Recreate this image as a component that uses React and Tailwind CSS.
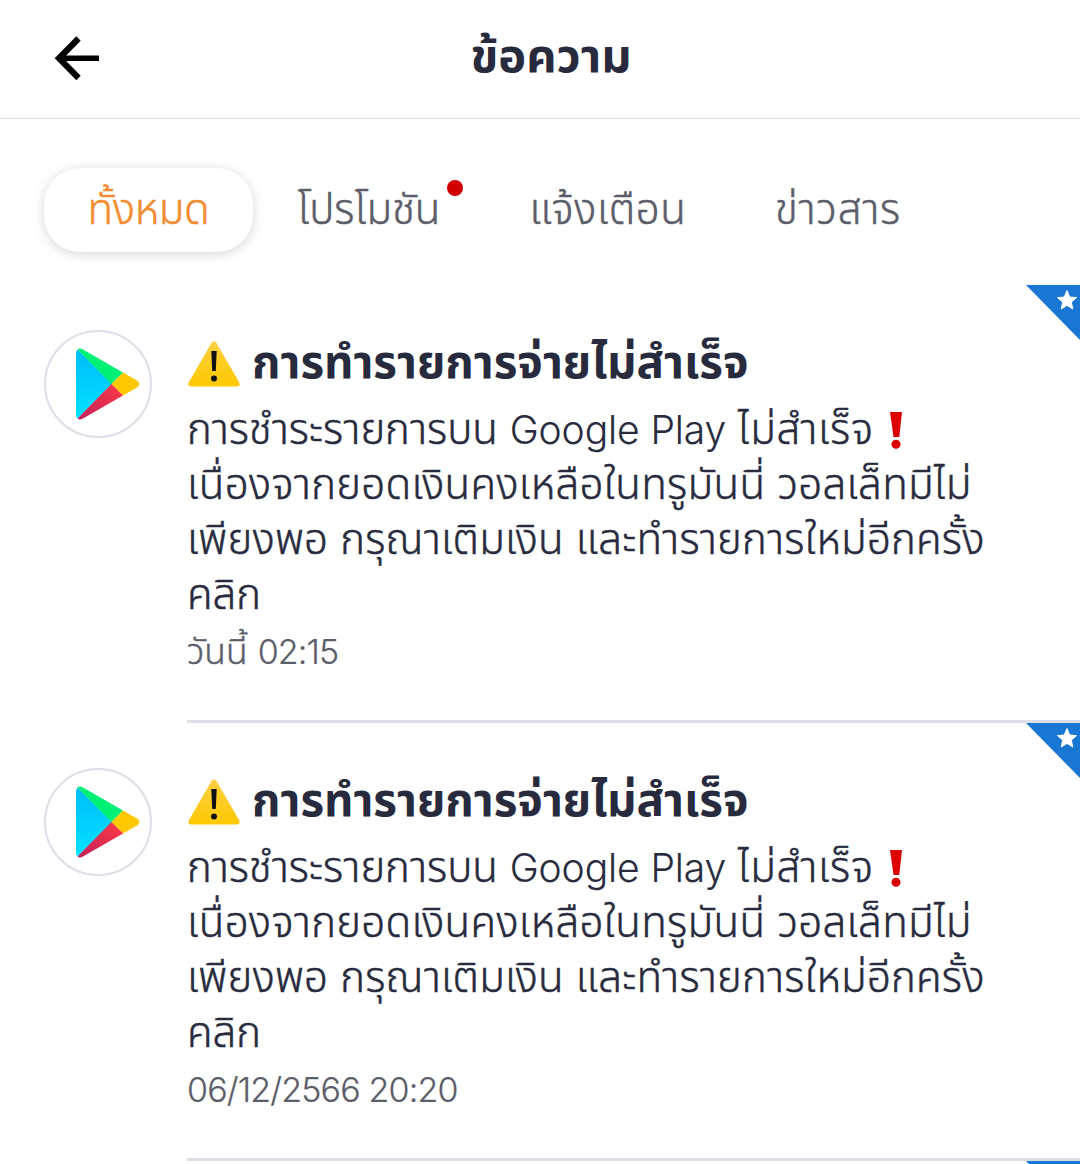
import React from "react";

const tabs = [
  { name: "ทั้งหมด", box: "w-[209px] tracking-[-0.3px]", active: true },
  { name: "โปรโมชัน", box: "w-[232px]", dot: true },
  { name: "แจ้งเตือน", box: "w-[246px] tracking-[0.6px]" },
  { name: "ข่าวสาร", box: "w-[214px] tracking-[0.8px]" },
];

const messages = [
  { id: 1, day: "วันนี้", time: "02:15" },
  { id: 2, day: "", time: "06/12/2566 20:20" },
];

const BackIcon = () => (
  <svg className="w-[46px] h-[46px]" viewBox="0 0 46 46" fill="none" stroke="#000" strokeWidth="5.6">
    <path d="M24.500 2.500 5 22.300 24.500 42" strokeWidth="6.2" />
    <path d="M6 22.300H45" />
  </svg>
);

const PlayIcon = () => (
  <svg className="w-[64px] h-[72px]" viewBox="0 0 64 72">
    <defs>
      <linearGradient id="playBlue" x1="0" y1="0" x2="0" y2="1">
        <stop offset="0" stopColor="#00bcfb" />
        <stop offset="1" stopColor="#00e2ff" />
      </linearGradient>
      <linearGradient id="playRed" x1="1" y1="0" x2="0" y2="1">
        <stop offset="0" stopColor="#ff3a44" />
        <stop offset="1" stopColor="#c3215c" />
      </linearGradient>
    </defs>
    <path d="M1.5 1.5Q0 3 0 6V66Q0 69 1.500 70.500L36.500 36Z" fill="url(#playBlue)" />
    <path d="M1.500 1.500Q3.500-.5 7 1.500L47 24.500 35.500 36Z" fill="#00f076" />
    <path d="M47 24.500 61 32.500Q66 36 61 39.500L47 47.500 35.500 36Z" fill="#ffc800" />
    <path d="M35.500 36 47 47.500 7 70.500Q3.500 72.500 1.500 70.500Z" fill="url(#playRed)" />
  </svg>
);

const WarningIcon = () => (
  <svg className="w-[52px] h-[46px] shrink-0" viewBox="0 0 52 46">
    <defs>
      <linearGradient id="warn" x1="0" y1="0" x2="0" y2="1">
        <stop offset="0" stopColor="#fbd044" />
        <stop offset="1" stopColor="#ffc800" />
      </linearGradient>
    </defs>
    <path d="M23.500 2Q26-1.500 28.500 2L51 41Q53 45 48.500 45.500H3.500Q-1 45 1 41Z" fill="url(#warn)" />
    <path d="M23.300 10H28.700L27.800 30H24.200Z" fill="#111" />
    <circle cx="26" cy="37.500" r="3" fill="#111" />
  </svg>
);

const ExclamationIcon = () => (
  <svg className="ml-[4px] inline-block w-[14px] h-[37px] align-[-5px]" viewBox="0 0 14 37">
    <path d="M1 0H13L10.300 25H4.500Z" fill="#dc0000" />
    <circle cx="7" cy="32.300" r="4.500" fill="#dc0000" />
  </svg>
);

const StarBadge = () => (
  <svg className="absolute right-0 top-0 w-[54px] h-[55px]" viewBox="0 0 54 55">
    <path d="M0 0H54V55Z" fill="#1976d2" />
    <path
      d="M41 5.500 43.700 12 50.500 12.600 45.300 17.200 46.800 24 41 20.400 35.200 24 36.700 17.200 31.500 12.600 38.300 12Z"
      fill="#fff"
      stroke="#fff"
      strokeLinejoin="round"
    />
  </svg>
);

const MessageItem = ({ message }) => {
  return (
    <div className="relative flex h-[438px] shrink-0 pl-[44px]">
      <StarBadge />
      <div className="mt-[45px] flex h-[108px] w-[108px] shrink-0 items-center justify-center rounded-full border-2 border-[#dddfe8] pl-[20px]">
        <PlayIcon />
      </div>
      <div className="ml-[35px] flex-1 border-b-[3px] border-[#dddfe6] pt-[43px] text-[#272b3d]">
        <div className="flex h-[72px] items-center pl-[1px]">
          <WarningIcon />
          <h2 className="relative -top-[2px] ml-[12px] whitespace-nowrap text-[45.7px] font-bold leading-[72px]">
            การทำรายการจ่ายไม่สำเร็จ
          </h2>
        </div>
        <div className="mt-[1px] whitespace-nowrap text-[42px] font-light leading-[55px] [-webkit-text-stroke:0.5px]">
          <p className="h-[55px]">
            การชำระรายการบน{" "}
            <span className="text-[39px] tracking-[-0.1px] [-webkit-text-stroke:0.1px]">Google Play</span>{" "}
            <span className="tracking-[0.7px]">ไม่สำเร็จ</span> <ExclamationIcon />
          </p>
          <p className="tracking-[0.3px]">เนื่องจากยอดเงินคงเหลือในทรูมันนี่ วอลเล็ทมีไม่</p>
          <p className="tracking-[0.22px]">เพียงพอ กรุณาเติมเงิน และทำรายการใหม่อีกครั้ง</p>
          <p>คลิก</p>
        </div>
        <p className="mt-[1px] whitespace-nowrap text-[35.5px] font-light leading-[60px] text-[#5b5d69] [-webkit-text-stroke:0.4px]">
          {message.day && <span>{message.day} </span>}
          <span className="text-[34px] tracking-[-0.85px] [-webkit-text-stroke:0.2px]">{message.time}</span>
        </p>
      </div>
    </div>
  );
};

export default function App() {
  return (
    <div className="flex h-[1164px] w-[1080px] flex-col overflow-hidden bg-white font-['Inter','Noto_Sans_Thai','Noto_Sans',sans-serif]">
      <header className="grid h-[119px] shrink-0 grid-cols-[200px_1fr_178px] items-center border-b border-[#dcdcdc]">
        <div className="pl-[54px]">
          <BackIcon />
        </div>
        <h1 className="pb-[9px] text-center text-[47px] font-bold leading-[70px] text-[#272b3d]">ข้อความ</h1>
      </header>
      <nav className="flex h-[166px] shrink-0 items-start pl-[44px] pt-[49px] text-[42px] font-light leading-[82px] text-[#5b5d69] [-webkit-text-stroke:0.5px]">
        {tabs.map((tab) => (
          <div key={tab.name} className={`${tab.box} h-[84px] text-center ${tab.active ? "rounded-[36px] text-[#f28c30] shadow-[0_2px_12px_rgba(0,0,0,0.17)]" : ""}`}>
            <span className="relative whitespace-nowrap">
              {tab.name}
              {tab.dot && <i className="absolute -right-[22px] -top-[3px] h-4 w-4 rounded-full bg-[#d20000]" />}
            </span>
          </div>
        ))}
      </nav>
      <main className="flex flex-col">
        {messages.map((message) => (
          <MessageItem key={message.id} message={message} />
        ))}
        <div className="relative h-[55px] shrink-0">
          <StarBadge />
        </div>
      </main>
    </div>
  );
}
